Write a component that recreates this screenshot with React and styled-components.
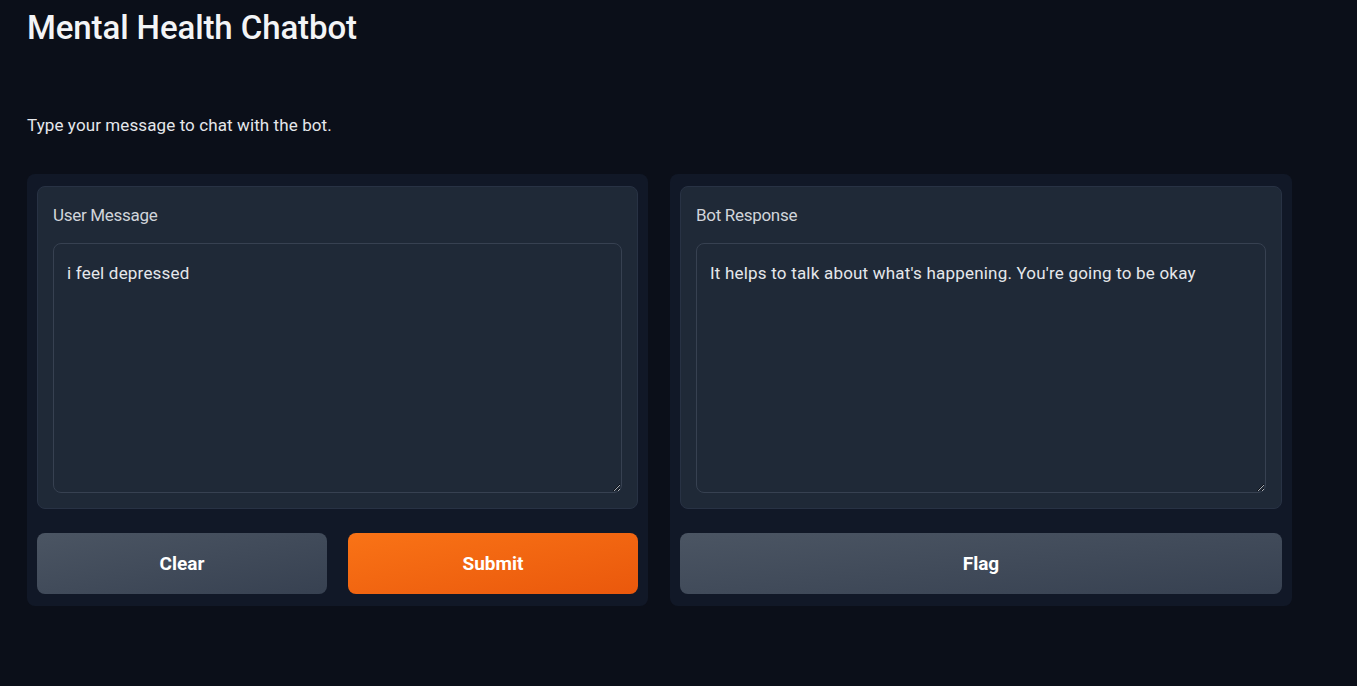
import React from 'react'
import styled, { createGlobalStyle } from 'styled-components'

const GlobalStyle = createGlobalStyle`
  html, body {
    margin: 0;
    padding: 0;
    background: #0b0f19;
  }
  body {
    font-family: Roboto, "Noto Sans", sans-serif;
    color: #e5e7eb;
  }
`

const Page = styled.div`
  width: 1265px;
  height: 686px;
  padding: 0 0 0 27px;
  box-sizing: content-box;
  overflow: hidden;
`

const Title = styled.h1`
  margin: 0;
  padding-top: 7px;
  height: 42px;
  line-height: 42px;
  font-size: 33px;
  font-weight: 500;
  letter-spacing: -0.1px;
  color: #f3f4f6;
`

const Description = styled.p`
  margin: 0;
  padding-top: 64px;
  height: 24px;
  line-height: 24px;
  font-size: 17px;
  letter-spacing: 0.1px;
  color: #e5e7eb;
`

const Row = styled.div`
  display: grid;
  grid-template-columns: 621px 622px;
  gap: 22px;
  margin-top: 37px;
`

const Panel = styled.div`
  background: #111827;
  border-radius: 8px;
  padding: 12px 10px;
  display: flex;
  flex-direction: column;
  gap: 24px;
`

const Block = styled.div`
  background: #1f2937;
  border: 1px solid #283244;
  border-radius: 8px;
  padding: 16px 15px 15px;
  display: flex;
  flex-direction: column;
  gap: 16px;
`

const Label = styled.span`
  font-size: 17px;
  letter-spacing: -0.3px;
  line-height: 24px;
  color: #d1d5db;
`

const Area = styled.textarea`
  height: 250px;
  box-sizing: border-box;
  background: #1f2937;
  border: 1px solid #374151;
  border-radius: 8px;
  padding: 17px 13px;
  resize: vertical;
  font-family: Roboto, "Noto Sans", sans-serif;
  font-size: 17px;
  letter-spacing: 0.2px;
  line-height: 24px;
  color: #e5e7eb;
  outline: none;
`

const Buttons = styled.div`
  display: grid;
  grid-template-columns: repeat(${p => p.$cols}, 1fr);
  gap: 21px;
`

const Button = styled.button`
  height: 61px;
  border: none;
  border-radius: 8px;
  font-family: Roboto, "Noto Sans", sans-serif;
  font-size: 19px;
  font-weight: 700;
  letter-spacing: 0;
  color: #ffffff;
  background: ${p => p.$primary
    ? 'linear-gradient(to bottom right, #f97316, #ea580c)'
    : 'linear-gradient(to bottom right, #4b5563, #374151)'};
  cursor: pointer;
`

export default function App() {
  return (
    <>
      <GlobalStyle />
      <Page>
        <Title>Mental Health Chatbot</Title>
        <Description>Type your message to chat with the bot.</Description>
        <Row>
          <Panel>
            <Block>
              <Label>User Message</Label>
              <Area readOnly defaultValue="i feel depressed" />
            </Block>
            <Buttons $cols={2}>
              <Button>Clear</Button>
              <Button $primary>Submit</Button>
            </Buttons>
          </Panel>
          <Panel>
            <Block>
              <Label>Bot Response</Label>
              <Area readOnly defaultValue="It helps to talk about what's happening. You're going to be okay" />
            </Block>
            <Buttons $cols={1}>
              <Button>Flag</Button>
            </Buttons>
          </Panel>
        </Row>
      </Page>
    </>
  )
}
